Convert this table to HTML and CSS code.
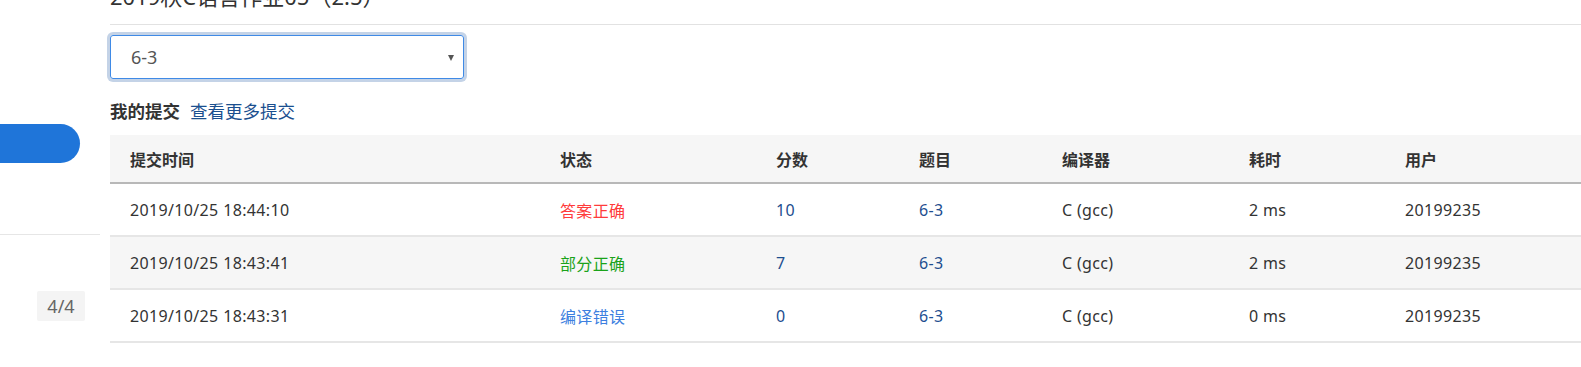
FILE: index.html
```html
<!DOCTYPE html>
<html lang="zh-CN">
<head>
<meta charset="utf-8">
<title>提交列表</title>
<link rel="stylesheet" href="styles.css">
</head>
<body>
<div class="layout">
  <aside class="sidebar">
    <div class="nav-pill"></div>
    <div class="side-divider"></div>
    <div class="page-badge">4/4</div>
  </aside>
  <main class="main">
    <h2 class="set-title">2019秋C语言作业05（2.5）</h2>
    <div class="select-wrap">
      <div class="fake-select">
        <span class="select-value">6-3</span>
        <span class="select-arrow"></span>
      </div>
    </div>
    <div class="sub-head">
      <span class="sub-title">我的提交</span>
      <a class="more-link" href="#">查看更多提交</a>
    </div>
    <table class="subs">
      <colgroup>
        <col class="c-time"><col class="c-status"><col class="c-score"><col class="c-prob"><col class="c-comp"><col class="c-cost"><col class="c-user">
      </colgroup>
      <thead>
        <tr><th>提交时间</th><th>状态</th><th>分数</th><th>题目</th><th>编译器</th><th>耗时</th><th>用户</th></tr>
      </thead>
      <tbody>
        <tr>
          <td>2019/10/25 18:44:10</td>
          <td class="st-ok">答案正确</td>
          <td><a href="#" class="lnk">10</a></td>
          <td><a href="#" class="lnk">6-3</a></td>
          <td>C (gcc)</td>
          <td>2 ms</td>
          <td>20199235</td>
        </tr>
        <tr class="alt">
          <td>2019/10/25 18:43:41</td>
          <td class="st-part">部分正确</td>
          <td><a href="#" class="lnk">7</a></td>
          <td><a href="#" class="lnk">6-3</a></td>
          <td>C (gcc)</td>
          <td>2 ms</td>
          <td>20199235</td>
        </tr>
        <tr>
          <td>2019/10/25 18:43:31</td>
          <td class="st-ce">编译错误</td>
          <td><a href="#" class="lnk">0</a></td>
          <td><a href="#" class="lnk">6-3</a></td>
          <td>C (gcc)</td>
          <td>0 ms</td>
          <td>20199235</td>
        </tr>
      </tbody>
    </table>
  </main>
</div>
</body>
</html>
```

FILE: styles.css
```css
html, body {
  margin: 0;
  padding: 0;
  background: #fff;
}
body {
  font-family: "Noto Sans", "Noto Sans CJK SC", sans-serif;
  color: #333;
  font-size: 16px;
  overflow: hidden;
}
.layout {
  display: flex;
  align-items: flex-start;
}
.sidebar {
  width: 100px;
  flex: 0 0 100px;
  display: flex;
  flex-direction: column;
}
.nav-pill {
  margin-top: 124px;
  width: 80px;
  height: 39px;
  background: #1f75d9;
  border-radius: 0 20px 20px 0;
}
.side-divider {
  margin-top: 71px;
  height: 1px;
  background: #e6e6e6;
}
.page-badge {
  margin-top: 56px;
  margin-left: 37px;
  width: 48px;
  height: 30px;
  line-height: 30px;
  text-align: center;
  background: #f4f4f4;
  border-radius: 2px;
  color: #666;
  font-size: 18px;
}
.main {
  flex: 1;
  min-width: 0;
  padding-left: 10px;
  overflow: hidden;
}
.set-title {
  margin: -19px 0 0 0;
  padding-bottom: 13px;
  font-size: 22px;
  line-height: 30px;
  font-weight: normal;
  color: #333;
  border-bottom: 1px solid #e2e2e2;
  white-space: nowrap;
}
.select-wrap {
  margin-top: 10px;
}
.fake-select {
  width: 323px;
  height: 42px;
  border: 1px solid #3f8ae6;
  border-radius: 3px;
  box-shadow: 0 0 0 3px #c4d3e7;
  display: flex;
  align-items: center;
  justify-content: space-between;
  padding: 0 9px 0 20px;
}
.select-value {
  font-size: 18px;
  color: #555;
}
.select-arrow {
  width: 0;
  height: 0;
  border-left: 3.5px solid transparent;
  border-right: 3.5px solid transparent;
  border-top: 6px solid #555;
  margin-top: 1px;
}
.sub-head {
  margin-top: 20px;
  height: 24px;
  line-height: 24px;
  font-size: 17.5px;
  display: flex;
  gap: 10px;
}
.sub-title {
  font-weight: bold;
  color: #333;
}
.more-link {
  color: #1a4f8f;
  text-decoration: none;
}
.subs {
  margin-top: 12px;
  border-collapse: collapse;
  table-layout: fixed;
  width: 1620px;
}
.c-time { width: 430px; }
.c-status { width: 216px; }
.c-score { width: 143px; }
.c-prob { width: 143px; }
.c-comp { width: 187px; }
.c-cost { width: 156px; }
.c-user { width: 345px; }
.subs th {
  background: #f6f6f6;
  height: 47px;
  padding: 0 0 0 20px;
  text-align: left;
  font-weight: bold;
  font-size: 16px;
  color: #333;
  border-bottom: 2px solid #b8b8b8;
  white-space: nowrap;
}
.subs td {
  height: 51px;
  padding: 0 0 0 20px;
  font-size: 16px;
  letter-spacing: 0.35px;
  color: #333;
  border-bottom: 2px solid #e6e6e6;
  white-space: nowrap;
}
.subs tr.alt td {
  background: #f6f6f6;
}
.subs td.st-ok { color: #ff3b3b; }
.subs td.st-part { color: #1aa31a; }
.subs td.st-ce { color: #3d7fe0; }
.lnk {
  color: #1d4e8f;
  text-decoration: none;
}
```
